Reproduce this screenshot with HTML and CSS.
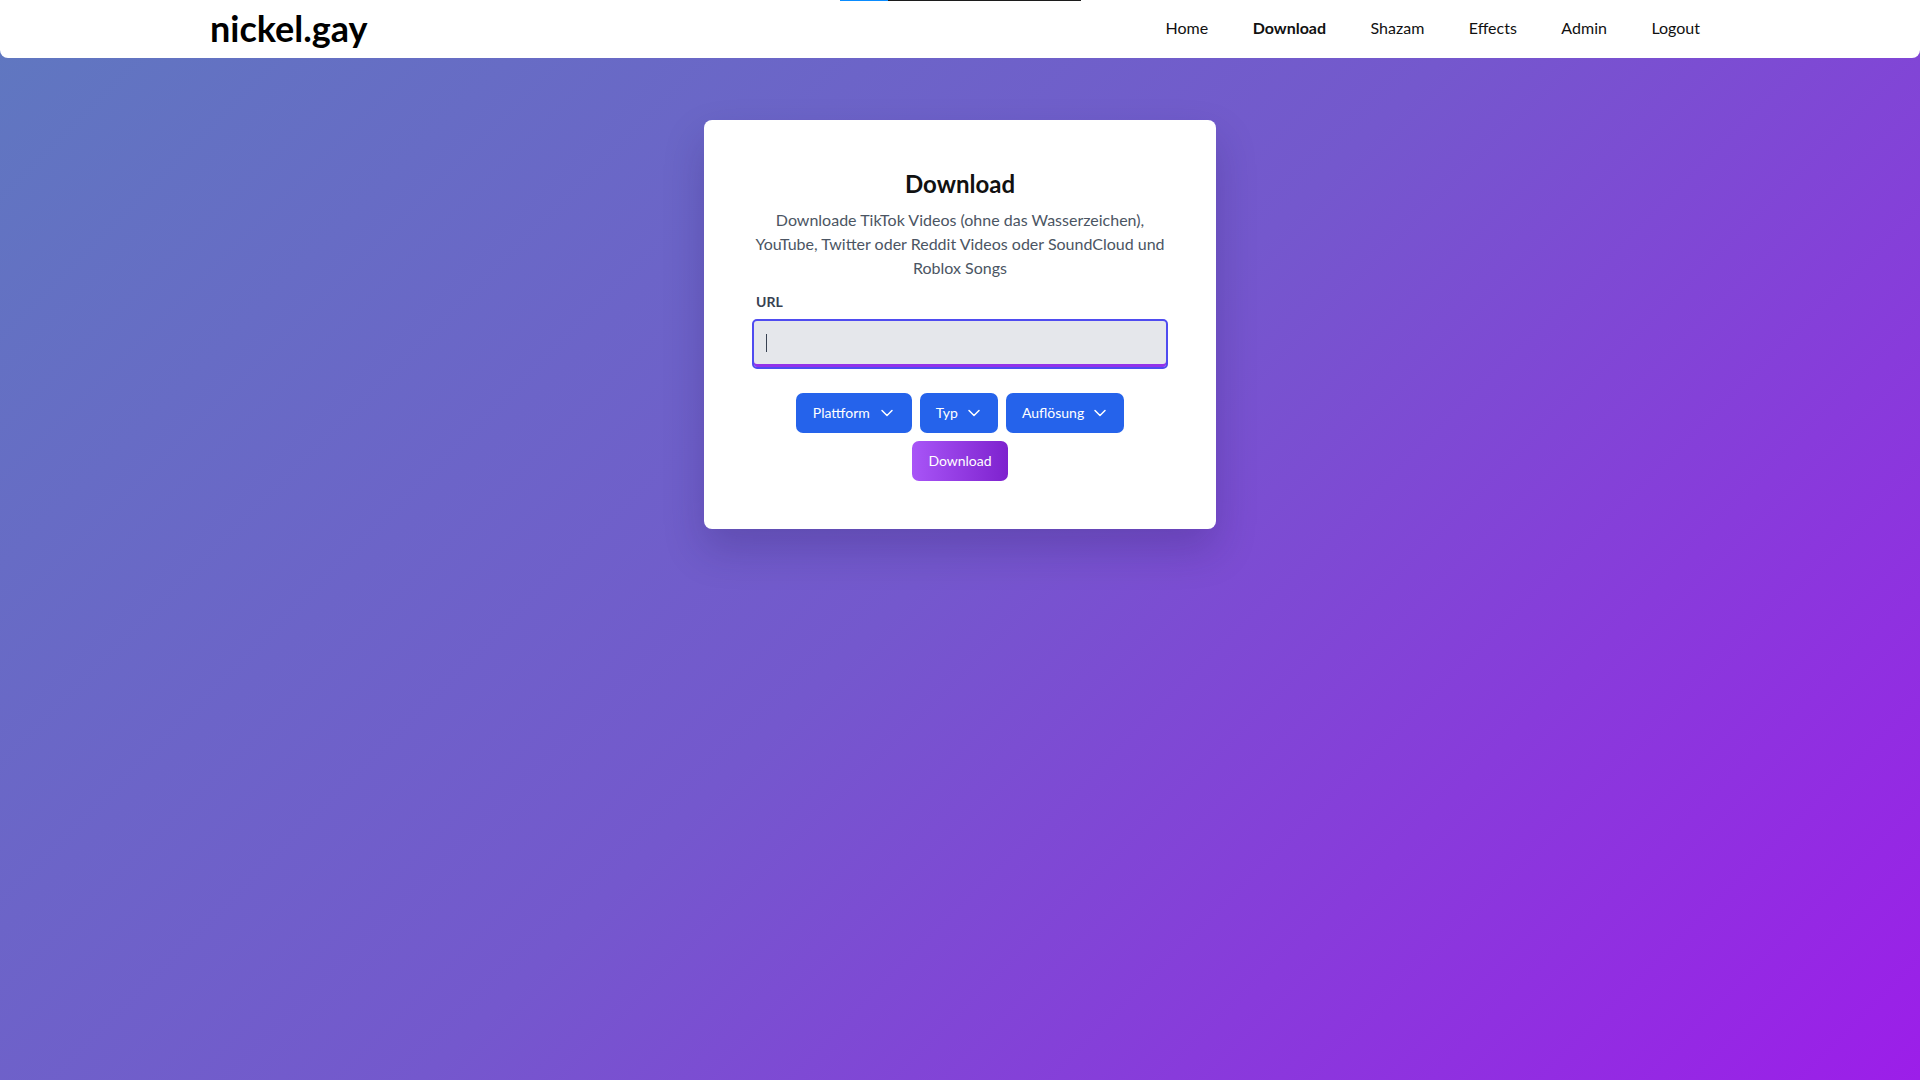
FILE: index.html
```html
<!DOCTYPE html>
<html lang="de">
<head>
<meta charset="utf-8">
<title>nickel.gay – Download</title>
<link rel="stylesheet" href="styles.css">
</head>
<body>
<div class="progress"><div class="progress-done"></div></div>
<header class="header">
  <div class="header-inner">
    <a class="logo" href="#">nickel.gay</a>
    <nav class="nav">
      <a href="#">Home</a>
      <a href="#" class="active">Download</a>
      <a href="#">Shazam</a>
      <a href="#">Effects</a>
      <a href="#">Admin</a>
      <a href="#">Logout</a>
    </nav>
  </div>
</header>
<main class="main">
  <section class="card">
    <h1 class="title">Download</h1>
    <p class="desc">Downloade TikTok Videos (ohne das Wasserzeichen), YouTube, Twitter oder Reddit Videos oder SoundCloud und Roblox Songs</p>
    <label class="label">URL</label>
    <div class="input"><span class="caret"></span></div>
    <div class="selects">
      <button class="select select-wide">Plattform <svg viewBox="0 0 16 16" width="16" height="16"><path d="M3 5.5l5 5 5-5" fill="none" stroke="#fff" stroke-width="1.5" stroke-linecap="round" stroke-linejoin="round"/></svg></button>
      <button class="select">Typ <svg viewBox="0 0 16 16" width="16" height="16"><path d="M3 5.5l5 5 5-5" fill="none" stroke="#fff" stroke-width="1.5" stroke-linecap="round" stroke-linejoin="round"/></svg></button>
      <button class="select">Auflösung <svg viewBox="0 0 16 16" width="16" height="16"><path d="M3 5.5l5 5 5-5" fill="none" stroke="#fff" stroke-width="1.5" stroke-linecap="round" stroke-linejoin="round"/></svg></button>
    </div>
    <div class="submit-row">
      <button class="submit">Download</button>
    </div>
  </section>
</main>
</body>
</html>
```
FILE: styles.css
```css
* { box-sizing: border-box; }
html, body { margin: 0; padding: 0; }
body {
  min-height: 100vh;
  font-family: Lato, "Noto Sans", sans-serif;
  background: linear-gradient(135deg, #5f78c0 0%, #7458cd 50%, #9c1ee9 100%);
  color: #111;
}
.progress {
  position: absolute;
  top: 0;
  left: 840px;
  width: 241px;
  height: 1px;
  background: #1c1c1c;
  z-index: 10;
}
.progress-done { width: 48px; height: 1px; background: #0a8cff; }
.header {
  background: #fff;
  height: 58px;
  border-radius: 0 0 8px 8px;
}
.header-inner {
  width: 1500px;
  height: 57px;
  margin: 0 auto;
  padding-right: 10px;
  display: flex;
  align-items: center;
  justify-content: space-between;
}
.logo {
  font-size: 36px;
  font-weight: 700;
  line-height: 43px;
  color: #000;
  text-decoration: none;
  margin-top: -1px;
}
.nav { display: flex; gap: 44.5px; margin-top: -2px; }
.nav a {
  font-size: 16px;
  line-height: 19px;
  color: #111;
  text-decoration: none;
}
.nav a.active { font-weight: 700; }
.main { display: flex; justify-content: center; padding-top: 62px; }
.card {
  width: 512px;
  background: #fff;
  border-radius: 8px;
  padding: 48px;
  box-shadow: 0 20px 40px rgba(30, 20, 80, 0.22);
  text-align: center;
}
.title {
  margin: 0;
  font-size: 24px;
  line-height: 32px;
  font-weight: 700;
  color: #111;
}
.desc {
  margin: 8px 0 0;
  font-size: 16px;
  line-height: 24px;
  color: #4b5563;
}
.label {
  display: block;
  text-align: left;
  margin-top: 12px;
  padding-left: 4px;
  font-size: 14px;
  line-height: 20px;
  font-weight: 700;
  color: #374151;
}
.input {
  margin-top: 7px;
  height: 50px;
  background: #e5e7eb;
  border: 2px solid #4f4cf0;
  border-radius: 5px;
  box-shadow: inset 0 -3px 0 #9333ea;
  display: flex;
  align-items: center;
  padding-left: 12px;
}
.caret {
  display: block;
  width: 1px;
  height: 18px;
  background: #374151;
  margin-top: -2px;
}
.selects {
  margin-top: 24px;
  display: flex;
  justify-content: center;
  gap: 8px;
}
.select {
  height: 40px;
  padding: 0 16px 2px;
  border: none;
  border-radius: 7px;
  background: #2563eb;
  color: #fff;
  font-family: Lato, "Noto Sans", sans-serif;
  font-size: 14px;
  display: flex;
  align-items: center;
  gap: 8px;
}
.select svg { display: block; margin-top: 2px; }
.select-wide { padding: 0 17px 2px; gap: 9px; }
.submit-row { margin-top: 8px; display: flex; justify-content: center; }
.submit {
  height: 40px;
  padding: 0 16px 2px;
  border: none;
  border-radius: 7px;
  background: linear-gradient(to right, #a855f7, #7e22ce);
  color: #fff;
  font-family: Lato, "Noto Sans", sans-serif;
  font-size: 14px;
}
```
